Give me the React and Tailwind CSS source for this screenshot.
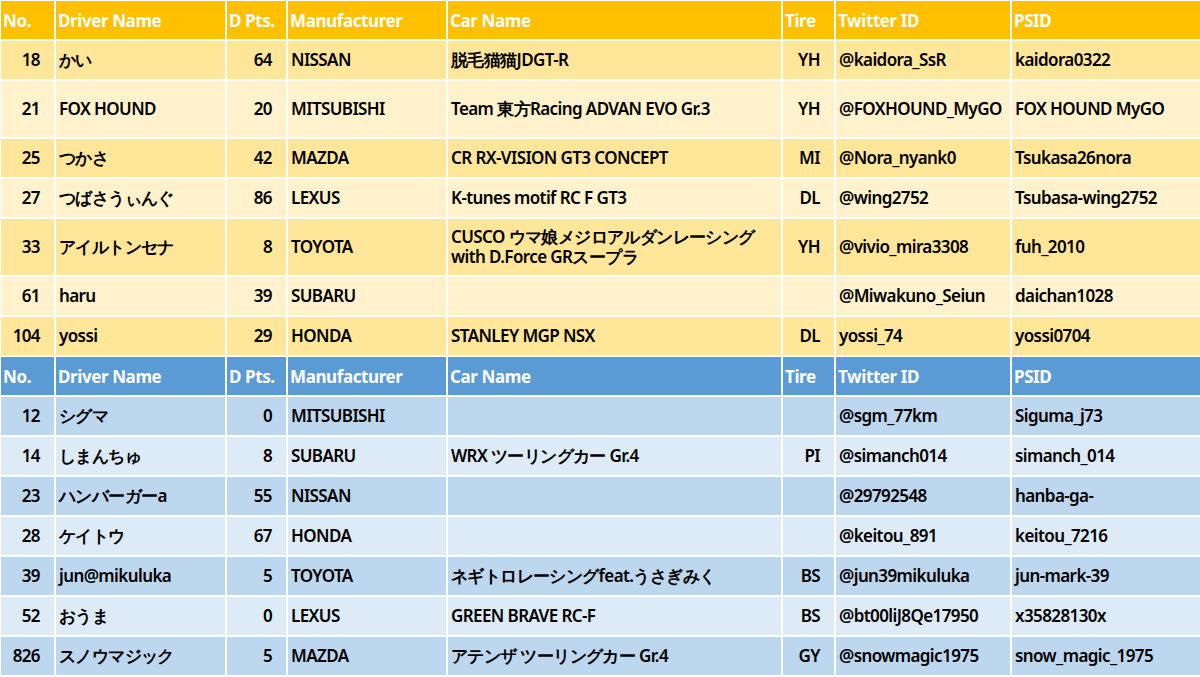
const colCls = ["w-[55px]", "w-[171px]", "w-[61px]", "w-[160px]", "w-[335px]", "w-[53px]", "w-[176px]", "w-[191px]"];
const heads = ["No.", "Driver Name", "D Pts.", "Manufacturer", "Car Name", "Tire", "Twitter ID", "PSID"];
const top = [
  ["18","かい","64","NISSAN","脱毛猫猫JDGT-R","YH","@kaidora_SsR","kaidora0322",false],
  ["21","FOX HOUND","20","MITSUBISHI","Team 東方Racing ADVAN EVO Gr.3","YH","@FOXHOUND_MyGO","FOX HOUND MyGO",true],
  ["25","つかさ","42","MAZDA","CR RX-VISION GT3 CONCEPT","MI","@Nora_nyank0","Tsukasa26nora",false],
  ["27","つばさうぃんぐ","86","LEXUS","K-tunes motif RC F GT3","DL","@wing2752","Tsubasa-wing2752",false],
  ["33","アイルトンセナ","8","TOYOTA","CUSCO ウマ娘メジロアルダンレーシング with D.Force GRスープラ","YH","@vivio_mira3308","fuh_2010",true],
  ["61","haru","39","SUBARU","","","@Miwakuno_Seiun","daichan1028",false],
  ["104","yossi","29","HONDA","STANLEY MGP NSX","DL","yossi_74","yossi0704",false],
];
const bot = [
  ["12","シグマ","0","MITSUBISHI","","","@sgm_77km","Siguma_j73",false],
  ["14","しまんちゅ","8","SUBARU","WRX ツーリングカー Gr.4","PI","@simanch014","simanch_014",false],
  ["23","ハンバーガーa","55","NISSAN","","","@29792548","hanba-ga-",false],
  ["28","ケイトウ","67","HONDA","","","@keitou_891","keitou_7216",false],
  ["39","jun@mikuluka","5","TOYOTA","ネギトロレーシングfeat.うさぎみく","BS","@jun39mikuluka","jun-mark-39",false],
  ["52","おうま","0","LEXUS","GREEN BRAVE RC-F","BS","@bt00liJ8Qe17950","x35828130x",false],
  ["826","スノウマジック","5","MAZDA","アテンザ ツーリングカー Gr.4","GY","@snowmagic1975","snow_magic_1975",false],
];
const right = [0, 2, 5];
function Head({ bg }) {
  return (
    <tr className={bg + " h-[40px]"}>
      {heads.map((h, i) => (
        <td key={i} className="border-2 border-white px-[2px] text-white font-bold text-[17px] leading-none align-middle tracking-[-0.4px]">{h}</td>
      ))}
    </tr>
  );
}
function Rows({ rows, a, b }) {
  return rows.map((r, ri) => (
    <tr key={ri} className={(ri % 2 === 0 ? a : b) + (r[8] ? " h-[58px]" : " h-[40px]")}>
      {r.slice(0, 8).map((c, i) => (
        <td key={i} className={"border-2 border-white px-[3px] text-[17px] leading-[20px] font-semibold tracking-[-0.6px] text-black align-middle " + (right.includes(i) ? "text-right pr-[14px]" : "")}>{c}</td>
      ))}
    </tr>
  ));
}
export default function App() {
  return (
    <div className="w-[1200px] h-[677px] bg-white overflow-hidden font-['Noto_Sans_CJK_JP','Noto_Sans',sans-serif]">
      <table className="border-collapse table-fixed w-[1202px] -ml-[1px] -mt-[1px]">
        <colgroup>{colCls.map((w, i) => <col key={i} className={w} />)}</colgroup>
        <tbody>
          <Head bg="bg-[#FFC000]" />
          <Rows rows={top} a="bg-[#FFE699]" b="bg-[#FFF2CC]" />
          <Head bg="bg-[#5B9BD5]" />
          <Rows rows={bot} a="bg-[#BDD7EE]" b="bg-[#DDEBF7]" />
        </tbody>
      </table>
    </div>
  );
}
